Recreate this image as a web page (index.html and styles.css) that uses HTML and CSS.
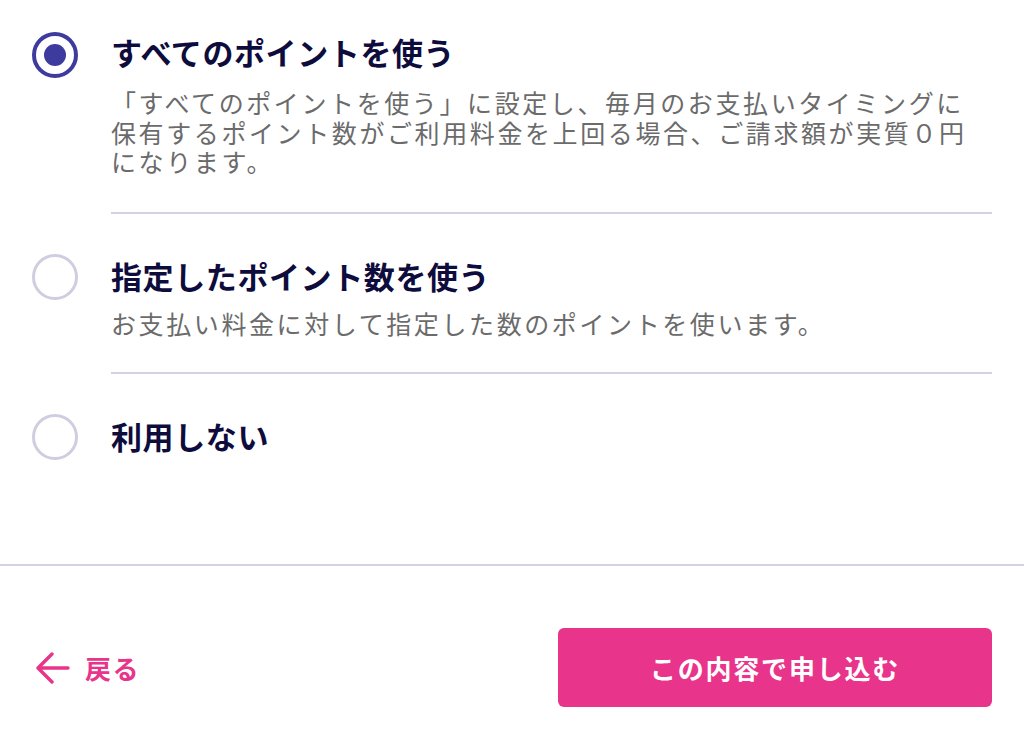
FILE: index.html
```html
<!DOCTYPE html>
<html lang="ja">
<head>
<meta charset="utf-8">
<link rel="stylesheet" href="styles.css">
</head>
<body>
<main class="options">
  <div class="option option-first">
    <span class="radio radio-checked"><span class="radio-dot"></span></span>
    <div class="option-body option-sep">
      <div class="option-title">すべてのポイントを使う</div>
      <p class="option-desc">「すべてのポイントを使う」に設定し、毎月のお支払いタイミングに保有するポイント数がご利用料金を上回る場合、ご請求額が実質０円になります。</p>
    </div>
  </div>
  <div class="option">
    <span class="radio"></span>
    <div class="option-body option-sep">
      <div class="option-title">指定したポイント数を使う</div>
      <p class="option-desc option-desc-short">お支払い料金に対して指定した数のポイントを使います。</p>
    </div>
  </div>
  <div class="option">
    <span class="radio"></span>
    <div class="option-body">
      <div class="option-title">利用しない</div>
    </div>
  </div>
</main>
<footer class="footer">
  <a class="back" href="#">
    <svg class="back-icon" width="34" height="32" viewBox="0 0 34 32" aria-hidden="true">
      <path d="M16 2 L2 16 L16 30 M2 16 H32" fill="none" stroke="#e8348a" stroke-width="3.4" stroke-linecap="round" stroke-linejoin="round"/>
    </svg>
    <span class="back-label">戻る</span>
  </a>
  <button class="submit" type="button">この内容で申し込む</button>
</footer>
</body>
</html>
```

FILE: styles.css
```css
html, body {
  margin: 0;
  padding: 0;
  background: #ffffff;
}

body {
  font-family: "Noto Sans CJK JP", "Noto Sans", sans-serif;
  width: 1024px;
  height: 746px;
  overflow: hidden;
}

.options {
  box-sizing: border-box;
  height: 564px;
  padding: 0 32px;
}

.option {
  display: flex;
  align-items: flex-start;
  gap: 33px;
  padding-top: 40px;
}

.option-first {
  padding-top: 30px;
}

.radio {
  box-sizing: border-box;
  flex: 0 0 46px;
  width: 46px;
  height: 46px;
  margin-top: 0;
  border: 3px solid #cfcde0;
  border-radius: 50%;
  display: flex;
  align-items: center;
  justify-content: center;
}

.radio-checked {
  border: 4px solid #3e3b9e;
  margin-top: 2px;
}

.radio-dot {
  width: 22px;
  height: 22px;
  border-radius: 50%;
  background: #3e3b9e;
}

.option-body {
  flex: 1;
  min-width: 0;
}

.option-sep {
  border-bottom: 2px solid #d3d2e3;
  padding-bottom: 34px;
}

.option-first .option-sep {
  padding-bottom: 35px;
}

.option-title {
  font-size: 31px;
  font-weight: 700;
  letter-spacing: 0.6px;
  line-height: 44px;
  color: #0e0c3c;
}

.option-desc {
  margin: 14px 0 0;
  padding-right: 20px;
  font-size: 25px;
  letter-spacing: 2.6px;
  line-height: 29.5px;
  color: #6b6b6b;
}

.option-desc-short {
  margin-top: 11px;
}

.footer {
  border-top: 2px solid #d3d2e3;
  display: flex;
  align-items: center;
  justify-content: space-between;
  padding: 62px 32px 0 32px;
}

.back {
  display: flex;
  align-items: center;
  gap: 15px;
  margin-left: 4px;
  text-decoration: none;
  color: #e8348a;
}

.back-icon {
  display: block;
}

.back-label {
  font-size: 26px;
  font-weight: 700;
  letter-spacing: 1.5px;
  line-height: 32px;
}

.submit {
  width: 434px;
  height: 79px;
  border: none;
  border-radius: 6px;
  background: #e9348b;
  color: #ffffff;
  font-family: "Noto Sans CJK JP", "Noto Sans", sans-serif;
  font-size: 26px;
  font-weight: 700;
  letter-spacing: 1.8px;
  cursor: pointer;
}
```
